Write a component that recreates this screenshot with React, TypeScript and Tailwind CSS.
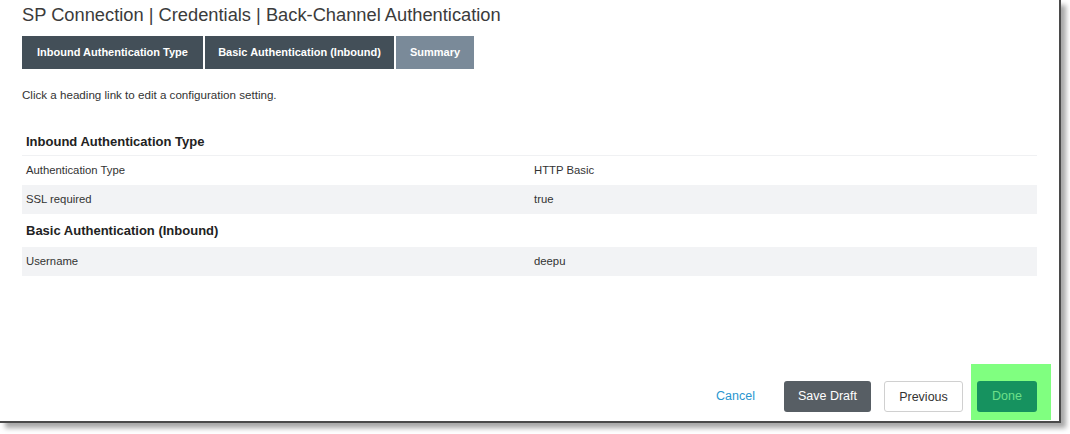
import React from 'react';

const tabs = [
  { name: 'Inbound Authentication Type', width: 'w-[181px]', active: false },
  { name: 'Basic Authentication (Inbound)', width: 'w-[189px]', active: false },
  { name: 'Summary', width: 'w-[78px]', active: true },
];

const sections = [
  {
    title: 'Inbound Authentication Type',
    rows: [
      { label: 'Authentication Type', value: 'HTTP Basic' },
      { label: 'SSL required', value: 'true' },
    ],
  },
  {
    title: 'Basic Authentication (Inbound)',
    rows: [{ label: 'Username', value: 'deepu' }],
  },
];

export default function App() {
  return (
    <div className="h-[434px] w-[1070px] bg-white font-['Liberation_Sans',Arial,sans-serif] text-[#333]">
      <div className="flex h-[423px] w-[1061px] flex-col border-b-2 border-r-2 border-[#4a4a4a] bg-white shadow-[5px_5px_5px_rgba(0,0,0,0.35)]">
        <h1 className="pl-[22px] pt-[3px] text-[18.3px] leading-[24px] text-[#3b3b3b]">
          SP Connection | Credentials | Back-Channel Authentication
        </h1>

        <div className="mt-[9px] flex gap-[2px] pl-[22px]">
          {tabs.map((tab) => (
            <div
              key={tab.name}
              className={`flex h-[33px] items-center justify-center text-[11px] font-bold text-white ${tab.width} ${
                tab.active ? 'bg-[#7a8a99]' : 'bg-[#434f58]'
              }`}
            >
              {tab.name}
            </div>
          ))}
        </div>

        <p className="mt-[18px] pl-[22px] text-[11.6px] leading-[16px]">Click a heading link to edit a configuration setting.</p>

        <div className="mt-[25px] pl-[22px] pr-[22px]">
          {sections.map((section, i) => (
            <div key={section.title}>
              <div
                className={`flex items-center pl-[4px] text-[13px] font-bold text-[#222] ${
                  i === 0 ? 'h-[28px] border-b border-[#f0f1f3]' : 'h-[33px]'
                }`}
              >
                {section.title}
              </div>
              {section.rows.map((row, j) => (
                <div
                  key={row.label}
                  className={`flex h-[29px] items-center text-[11.3px] ${
                    (i === 0 && j === 1) || i === 1 ? 'bg-[#f2f3f5]' : 'bg-white'
                  }`}
                >
                  <div className="w-[512px] pl-[4px]">{row.label}</div>
                  <div>{row.value}</div>
                </div>
              ))}
            </div>
          ))}
        </div>

        <div className="mt-auto flex items-end justify-end pb-[1px] pr-[8px]">
          <button className="mb-[14px] mr-[29px] text-[12.5px] text-[#2a96cf]">Cancel</button>
          <button className="mb-[8px] mr-[13px] h-[31px] w-[87px] rounded-[3px] bg-[#575e64] text-[12.5px] text-white">
            Save Draft
          </button>
          <button className="mb-[8px] mr-[8px] h-[31px] w-[79px] rounded-[3px] border border-[#d0d0d0] bg-white pt-[2px] text-[12.5px] text-[#333]">
            Previous
          </button>
          <div className="bg-[#80ff80] pb-[8px] pl-[6px] pr-[14px] pt-[17px]">
            <button className="h-[31px] w-[60px] rounded-[3px] bg-[#16925f] text-[12.5px] text-[#6ee08a]">Done</button>
          </div>
        </div>
      </div>
    </div>
  );
}
